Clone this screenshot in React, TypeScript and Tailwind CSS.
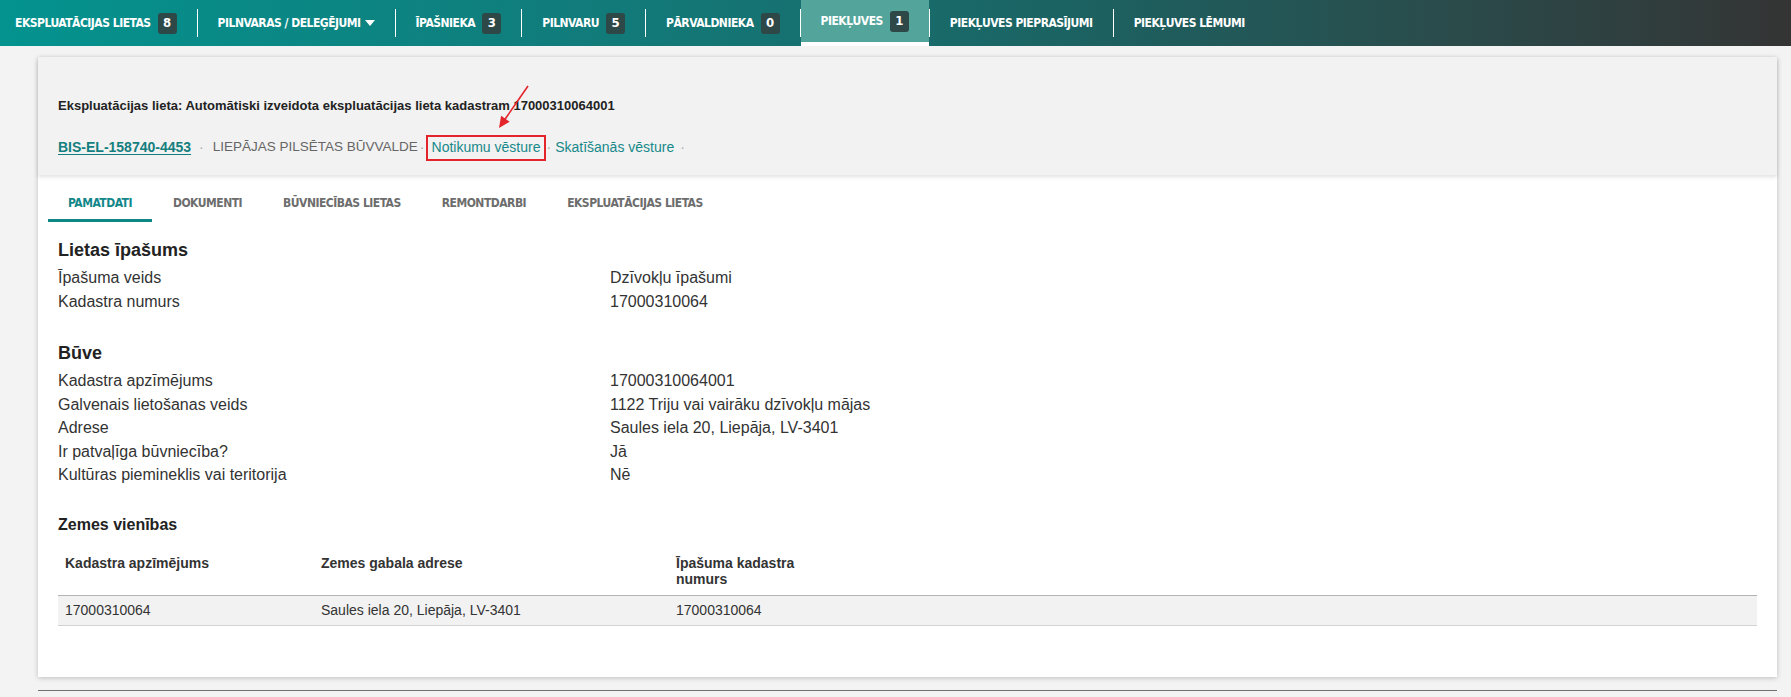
const navItems: { label: string; badge?: string; caret?: boolean; active?: boolean }[] = [
  { label: 'Ekspluatācijas lietas', badge: '8' },
  { label: 'Pilnvaras / deleģējumi', caret: true },
  { label: 'Īpašnieka', badge: '3' },
  { label: 'Pilnvaru', badge: '5' },
  { label: 'Pārvaldnieka', badge: '0' },
  { label: 'Piekļuves', badge: '1', active: true },
  { label: 'Piekļuves pieprasījumi' },
  { label: 'Piekļuves lēmumi' },
];

const tabs = ['Pamatdati', 'Dokumenti', 'Būvniecības lietas', 'Remontdarbi', 'Ekspluatācijas lietas'];

const propertyRows = [
  ['Īpašuma veids', 'Dzīvokļu īpašumi'],
  ['Kadastra numurs', '17000310064'],
];

const buildingRows = [
  ['Kadastra apzīmējums', '17000310064001'],
  ['Galvenais lietošanas veids', '1122 Triju vai vairāku dzīvokļu mājas'],
  ['Adrese', 'Saules iela 20, Liepāja, LV-3401'],
  ['Ir patvaļīga būvniecība?', 'Jā'],
  ['Kultūras piemineklis vai teritorija', 'Nē'],
];

function NavBar() {
  return (
    <div className="flex h-[46px] items-stretch bg-[linear-gradient(90deg,#04938f_0%,#127a79_35%,#1c6262_60%,#2a4c4c_80%,#343434_100%)] font-['Liberation_Sans_Narrow','DejaVu_Sans_Condensed',sans-serif] text-[12px] font-bold uppercase text-white">
      {navItems.map((item, i) => (
        <div key={item.label} className="flex items-stretch">
          {i > 0 && <div className="h-[28px] w-px self-center bg-white" />}
          <a
            href="#"
            className={`flex items-center gap-[7px] ${i === 0 ? 'pl-[15px]' : 'pl-[20px]'} pr-[20px] ${
              item.active ? 'border-b-4 border-white bg-[#53a59c]' : ''
            }`}
          >
            <span className="tracking-[-0.5px]">{item.label}</span>
            {item.caret && (
              <svg width="10" height="6" viewBox="0 0 10 6" className="-ml-[3px]">
                <path d="M0 0h10L5 6z" fill="#fff" />
              </svg>
            )}
            {item.badge && (
              <span className="flex h-[21px] w-[19px] items-center justify-center rounded-[3px] bg-[#2e4747] text-[13px]">
                {item.badge}
              </span>
            )}
          </a>
        </div>
      ))}
    </div>
  );
}

function DataRows({ rows }: { rows: string[][] }) {
  return (
    <div className="mt-[5px] grid grid-cols-[552px_1fr] text-[16px] leading-[23.5px] text-[#333]">
      {rows.map(([k, v]) => (
        <div key={k} className="contents">
          <div>{k}</div>
          <div>{v}</div>
        </div>
      ))}
    </div>
  );
}

export default function App() {
  return (
    <div className="min-h-screen bg-[#f3f3f3] font-['Liberation_Sans',Arial,sans-serif]">
      <NavBar />
      <div className="pl-[38px] pr-[14px] pt-[11px]">
        <div className="bg-white shadow-[0_1px_5px_rgba(0,0,0,0.22)]">
          <div className="bg-[#f2f2f2] px-[20px] pb-[18px] pt-[41px] shadow-[0_2px_4px_rgba(0,0,0,0.12)]">
            <div className="text-[13px] font-bold leading-[16px] text-[#222]">
              Ekspluatācijas lieta: Automātiski izveidota ekspluatācijas lieta kadastram 17000310064001
            </div>
            <div className="mt-[23px] flex items-center text-[14px] leading-[20px]">
              <a href="#" className="font-bold text-[#137f7e] underline underline-offset-2">
                BIS-EL-158740-4453
              </a>
              <span className="ml-[8px] mr-[9px] text-[#aaa]">·</span>
              <span className="text-[13.5px] text-[#666]">LIEPĀJAS PILSĒTAS BŪVVALDE</span>
              <span className="ml-[2px] mr-[7px] text-[#aaa]">·</span>
              <span className="relative">
                <a href="#" className="text-[#17898a]">
                  Notikumu vēsture
                </a>
                <span className="pointer-events-none absolute -bottom-[4px] -left-[6px] -right-[6px] -top-[2px] border-2 border-[#e3242b]" />
                <svg
                  width="45"
                  height="50"
                  viewBox="0 0 45 50"
                  className="pointer-events-none absolute left-[60px] top-[-55px]"
                >
                  <line x1="36" y1="4" x2="12.5" y2="38" stroke="#e3242b" strokeWidth="1.6" />
                  <path d="M7 46L17.6 39.8L9.1 33.8Z" fill="#e3242b" />
                </svg>
              </span>
              <span className="ml-[6px] mr-[4px] text-[#aaa]">·</span>
              <a href="#" className="text-[#17898a]">
                Skatīšanās vēsture
              </a>
              <span className="ml-[6px] text-[#aaa]">·</span>
            </div>
          </div>

          <div className="flex gap-[1px] px-[10px] font-['Liberation_Sans_Narrow','DejaVu_Sans_Condensed',sans-serif] text-[12px] font-bold uppercase">
            {tabs.map((t, i) => (
              <a
                key={t}
                href="#"
                className={`border-b-[3px] px-[20px] pb-[6px] pt-[18px] leading-[20px] tracking-[-0.5px] ${
                  i === 0 ? 'border-[#0d8783] text-[#12878a]' : 'border-transparent text-[#6d6d6d]'
                }`}
              >
                {t}
              </a>
            ))}
          </div>

          <div className="px-[20px] pb-[51px]">
            <h2 className="mt-[17px] text-[18px] font-bold leading-[22px] text-[#222]">Lietas īpašums</h2>
            <DataRows rows={propertyRows} />

            <h2 className="mt-[29px] text-[18px] font-bold leading-[22px] text-[#222]">Būve</h2>
            <DataRows rows={buildingRows} />

            <h3 className="mt-[28px] text-[16px] font-bold leading-[20px] text-[#222]">Zemes vienības</h3>
            <table className="mt-[12px] w-full border-collapse text-[14px] text-[#333]">
              <thead>
                <tr className="text-left align-top font-bold">
                  <th className="w-[256px] px-[7px] pb-[8px] pt-[8px] leading-[16px]">Kadastra apzīmējums</th>
                  <th className="w-[355px] px-[7px] pb-[8px] pt-[8px] leading-[16px]">Zemes gabala adrese</th>
                  <th className="w-[150px] px-[7px] pb-[8px] pt-[8px] leading-[16px]">Īpašuma kadastra numurs</th>
                  <th />
                </tr>
              </thead>
              <tbody>
                <tr className="border-b border-t border-b-[#d2d2d2] border-t-[#b3b3b3] bg-[#f2f2f2]">
                  <td className="px-[7px] py-[7px] leading-[15px]">17000310064</td>
                  <td className="px-[7px] py-[7px] leading-[15px]">Saules iela 20, Liepāja, LV-3401</td>
                  <td className="px-[7px] py-[7px] leading-[15px]">17000310064</td>
                  <td />
                </tr>
              </tbody>
            </table>
          </div>
        </div>
        <div className="mt-[13px] h-px bg-[#707070]" />
      </div>
    </div>
  );
}
